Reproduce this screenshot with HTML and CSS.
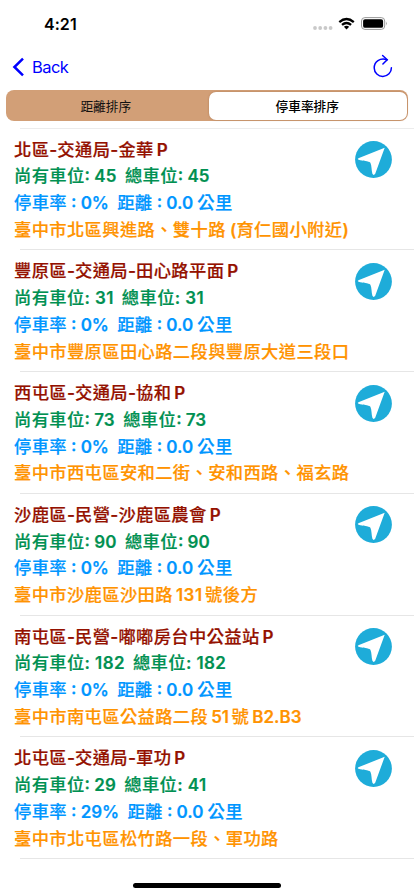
FILE: index.html
```html
<!DOCTYPE html>
<html lang="zh-Hant">
<head>
<meta charset="utf-8">
<title>停車率排序</title>
<link rel="stylesheet" href="styles.css">
</head>
<body>
<svg width="0" height="0" class="defs">
  <symbol id="nav" viewBox="0 0 37 37">
    <circle cx="18.5" cy="18.5" r="18.4" fill="#1eacd9"/>
    <path d="M29.7 6.8 L20.2 32.8 Q18.6 35 17.4 32.8 C16.4 29.5 16.8 24.5 15.4 21.8 C13.6 19.8 8 20.4 3.6 18.8 Q1.8 17.8 4 17 Z" fill="#fff"/>
  </symbol>
</svg>
<div class="status">
  <div class="time">4:21</div>
  <svg class="signals" width="76" height="16" viewBox="0 0 76 16">
    <g fill="#c9c9c9"><circle cx="3" cy="12" r="1.9"/><circle cx="8.2" cy="12" r="1.9"/><circle cx="13.4" cy="12" r="1.9"/><circle cx="18.6" cy="12" r="1.9"/></g>
    <g fill="none" stroke="#000" stroke-width="2.3"><path d="M27.3 6.1 Q34.5 -.1 41.8 6.1"/><path d="M30 8.9 Q34.5 5.2 39.1 8.9"/></g>
    <path d="M31.9 10.7 Q34.5 8.7 37.2 10.7 L34.5 13.4Z"/>
    <rect x="49.5" y="1.6" width="23.2" height="11.8" rx="3.4" fill="#fff" stroke="#999"/>
    <rect x="51.1" y="3.2" width="20" height="8.6" rx="1.9"/>
    <path d="M74 5.6 Q75.6 7.5 74 9.4Z" fill="#999"/>
  </svg>
</div>
<div class="navbar">
  <div class="back">
    <svg width="13" height="20" viewBox="0 0 13 20"><path d="M11 1.7 L2.4 10 L11 18.3" fill="none" stroke="#00f" stroke-width="2.5"/></svg>
    <span>Back</span>
  </div>
  <svg class="reload" width="22" height="26" viewBox="0 0 22 26"><g fill="none" stroke="#00f" stroke-width="1.5" stroke-linecap="round"><path d="M15 6.7 C8 4.5 2.2 8.5 2.2 15 A8.6 8.6 0 0 0 19.4 14.7"/><path d="M10.6 2.5 L15.2 6.7 L10.9 11"/></g></svg>
</div>
<div class="segmented">
  <div class="seg">距離排序</div>
  <div class="seg on">停車率排序</div>
</div>
<div class="list">
  <div class="row">
    <div class="info">
      <div class="line name">北區<i>-</i>交通局<i>-</i>金華<b class="p">P</b></div>
      <div class="line free">尚有車位<b>: 45 </b> 總車位<b>: 45</b></div>
      <div class="line rate">停車率<b> : 0% </b> 距離<b> : 0.0 </b>公里</div>
      <div class="line addr">臺中市北區興進路、雙十路<b> (</b>育仁國小附近<b>)</b></div>
    </div>
    <svg class="go"><use href="#nav"/></svg>
  </div>
  <div class="row">
    <div class="info">
      <div class="line name">豐原區<i>-</i>交通局<i>-</i>田心路平面<b class="p">P</b></div>
      <div class="line free">尚有車位<b class="one">: 31 </b> 總車位<b class="one">: 31</b></div>
      <div class="line rate">停車率<b> : 0% </b> 距離<b> : 0.0 </b>公里</div>
      <div class="line addr">臺中市豐原區田心路二段與豐原大道三段口</div>
    </div>
    <svg class="go"><use href="#nav"/></svg>
  </div>
  <div class="row">
    <div class="info">
      <div class="line name">西屯區<i>-</i>交通局<i>-</i>協和<b class="p">P</b></div>
      <div class="line free">尚有車位<b>: 73 </b> 總車位<b>: 73</b></div>
      <div class="line rate">停車率<b> : 0% </b> 距離<b> : 0.0 </b>公里</div>
      <div class="line addr">臺中市西屯區安和二街、安和西路、福玄路</div>
    </div>
    <svg class="go"><use href="#nav"/></svg>
  </div>
  <div class="row">
    <div class="info">
      <div class="line name">沙鹿區<i>-</i>民營<i>-</i>沙鹿區農會<b class="p">P</b></div>
      <div class="line free">尚有車位<b>: 90 </b> 總車位<b>: 90</b></div>
      <div class="line rate">停車率<b> : 0% </b> 距離<b> : 0.0 </b>公里</div>
      <div class="line addr">臺中市沙鹿區沙田路<b class="num wide">131</b>號後方</div>
    </div>
    <svg class="go"><use href="#nav"/></svg>
  </div>
  <div class="row">
    <div class="info">
      <div class="line name">南屯區<i>-</i>民營<i>-</i>嘟嘟房台中公益站<b class="p">P</b></div>
      <div class="line free">尚有車位<b class="one">: 182 </b> 總車位<b class="one">: 182</b></div>
      <div class="line rate">停車率<b> : 0% </b> 距離<b> : 0.0 </b>公里</div>
      <div class="line addr">臺中市南屯區公益路二段<b class="num">51</b>號<b class="num">B2.B3</b></div>
    </div>
    <svg class="go"><use href="#nav"/></svg>
  </div>
  <div class="row">
    <div class="info">
      <div class="line name">北屯區<i>-</i>交通局<i>-</i>軍功<b class="p">P</b></div>
      <div class="line free">尚有車位<b>: 29 </b> 總車位<b class="one">: 41</b></div>
      <div class="line rate">停車率<b> : 29% </b> 距離<b> : 0.0 </b>公里</div>
      <div class="line addr">臺中市北屯區松竹路一段、軍功路</div>
    </div>
    <svg class="go"><use href="#nav"/></svg>
  </div>
</div>
<div class="home"></div>
</body>
</html>
```
FILE: styles.css
```css
* { box-sizing: border-box; }
body {
  margin: 0;
  width: 414px;
  height: 896px;
  overflow: hidden;
  background: #fff;
  font-family: Inter, "Noto Sans CJK TC", sans-serif;
  display: flex;
  flex-direction: column;
}
.defs { display: none; }
.status {
  height: 44px;
  flex: none;
  display: flex;
  justify-content: space-between;
  padding: 16px 26px 0 44px;
}
.time { font-size: 16px; line-height: 16px; font-weight: 600; letter-spacing: 0.05px; }
.navbar {
  height: 46px;
  flex: none;
  display: flex;
  align-items: center;
  justify-content: space-between;
  padding: 0 20px 0 12px;
  color: #00f;
}
.back { display: flex; align-items: center; gap: 7px; font-size: 16.5px; letter-spacing: -0.55px; }
.reload { margin-top: -3px; }
.segmented {
  height: 31px;
  flex: none;
  margin: 0 6px;
  padding: 1.5px;
  display: flex;
  background: #d29f77;
  border-radius: 8px;
}
.seg {
  width: 201.5px;
  display: flex;
  align-items: center;
  justify-content: center;
  font: 400 12.7px/20px "Noto Sans CJK TC", sans-serif;
  color: #111;
  padding: 0 5px 0 0;
}
.seg.on { width: 197.5px; padding: 0 1px 0 0; background: #fff; border-radius: 7px; font-weight: 500; color: #000; box-shadow: 0 0 2px rgba(120, 60, 20, .4); }
.list { margin-top: 6.5px; border-top: 1px solid #ececec; flex: none; width: 394px; margin-left: 20px; }
.row {
  height: 121.8px;
  display: flex;
  justify-content: space-between;
  padding: 7px 22px 0 0;
  border-bottom: 1px solid #e6e6e6;
}
.info { margin-left: -6px; }
.line {
  height: 26.8px;
  font: 500 17.3px/26.8px "Noto Sans CJK TC", sans-serif;
  letter-spacing: .37px;
  white-space: pre;
  -webkit-text-stroke: .2px currentColor;
}
.line b { font-family: Inter, sans-serif; font-weight: 600; font-size: 17px; letter-spacing: 0; }
.line i { font-family: Inter, sans-serif; font-style: normal; font-weight: 600; letter-spacing: 0; }
.line .p { margin-left: 3px; }
.line .num { margin: 0 2.5px 0 3px; }
.line .wide { letter-spacing: .5px; }
.line .one { letter-spacing: .4px; }
.line .one:first-child { margin-right: -1px; }
.name { color: #941100; }
.free { color: #009051; }
.rate { color: #0096ff; word-spacing: -.15px; }
.addr { color: #ff9300; }
.go { width: 37px; height: 37px; margin-top: 5.5px; flex: none; }
.home { width: 148px; height: 5px; flex: none; margin: 23.5px 0 0 133px; border-radius: 3px; background: #000; }
```
